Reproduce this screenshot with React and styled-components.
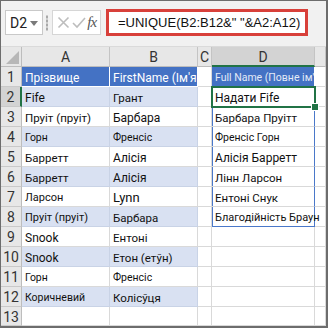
import React from 'react';
import styled, { createGlobalStyle } from 'styled-components';

const GlobalStyle = createGlobalStyle`
	html, body {
		margin: 0;
		padding: 0;
		background: #ffffff;
	}
	* {
		box-sizing: border-box;
	}
`;

const Sheet = styled('div')`
	width: 328px;
	height: 328px;
	border: 1px solid #6d6d6d;
	border-width: 1px 2px 2px 1px;
	display: flex;
	flex-direction: column;
	overflow: hidden;
	font-family: Roboto, "Liberation Sans", Arial, sans-serif;
	background: #ffffff;
`;

const FormulaBar = styled('div')`
	height: 46px;
	flex-shrink: 0;
	display: flex;
	align-items: center;
	padding: 0 0 2px 4px;
	background: #f1f1f1;
	border-bottom: 1px solid #dadada;
`;

const NameBox = styled('div')`
	width: 38px;
	height: 25px;
	background: #ffffff;
	border: 1px solid #c9c9c9;
	display: flex;
	align-items: center;
	padding-left: 4px;
	gap: 3px;
	font-size: 14px;
	color: #222;
`;

const Caret = styled('span')`
	width: 0;
	height: 0;
	border-left: 4px solid transparent;
	border-right: 4px solid transparent;
	border-top: 5px solid #7a7a7a;
	margin-top: 1px;
`;

const Grip = styled('div')`
	width: 2px;
	height: 16px;
	margin: 0 4px 0 3px;
	background-image: radial-gradient(#a9a9a9 0.8px, transparent 1px);
	background-size: 2px 4px;
`;

const FuncBox = styled('div')`
	width: 49px;
	height: 25px;
	background: #ffffff;
	border: 1px solid #d6d6d6;
	display: flex;
	align-items: center;
	justify-content: space-around;
	padding: 0 3px;
`;

const Fx = styled('span')`
	font-family: "Liberation Serif", "Times New Roman", serif;
	font-style: italic;
	font-size: 15px;
	color: #555;
	letter-spacing: -1px;
`;

const FormulaInput = styled('div')`
	margin-left: 5px;
	width: 202px;
	height: 27px;
	border: 3px solid #d8403a;
	background: #ffffff;
	display: flex;
	align-items: center;
	padding-left: 9px;
	font-family: "Liberation Sans", Arial, sans-serif;
	font-size: 13px;
	color: #111;
	white-space: nowrap;
`;

const Grid = styled('div')`
	flex: 1;
	display: grid;
	grid-template-columns: 21px 88px 88px 14px 103px 1fr;
	grid-template-rows: 20px repeat(12, 20px) 1fr;
	font-size: 11.5px;
`;

const Corner = styled('div')`
	background: #e7e7e7;
	border-right: 1px solid #bdbdbd;
	border-bottom: 1px solid #bdbdbd;
	position: relative;
	&::after {
		content: '';
		position: absolute;
		right: 2px;
		bottom: 2px;
		width: 0;
		height: 0;
		border-left: 13px solid transparent;
		border-bottom: 13px solid #b7b7b7;
	}
`;

const ColHead = styled('div')`
	background: ${({ selected }) => (selected ? '#d3d3d3' : '#e7e7e7')};
	border-right: 1px solid #c4c4c4;
	border-bottom: ${({ selected }) => (selected ? '2px solid #217346' : '1px solid #bdbdbd')};
	display: flex;
	align-items: center;
	justify-content: center;
	font-size: 14px;
	color: #333;
	padding-top: 1px;
`;

const RowHead = styled('div')`
	background: ${({ selected }) => (selected ? '#d3d3d3' : '#e7e7e7')};
	border-right: ${({ selected }) => (selected ? '2px solid #217346' : '1px solid #bdbdbd')};
	border-bottom: 1px solid #c9c9c9;
	display: flex;
	align-items: center;
	justify-content: center;
	font-size: 14px;
	color: #333;
	padding-top: 1px;
`;

// plain cells stay transparent so text from the left neighbour can run over them
const fills = {
	header: '#4472c4',
	band: '#d9e1f2',
	plain: 'transparent',
};

const lines = {
	header: '#ffffff',
	band: '#c9d3e6',
	plain: '#d9d9d9',
};

const Cell = styled('div')`
	background: ${({ fill }) => fills[fill]};
	color: ${({ fill, light }) => (fill === 'header' ? (light ? '#e3eaf7' : '#ffffff') : '#111')};
	font-size: ${({ size }) => size || 11.5}px;
	border-right: 1px solid ${({ fill }) => lines[fill]};
	border-bottom: 1px solid ${({ fill }) => lines[fill]};
	white-space: nowrap;
	overflow: ${({ clip }) => (clip ? 'hidden' : 'visible')};
	line-height: 20px;
	padding: 1px 0 0 3px;
	${({ spill }) => spill && 'border-right: 1px solid #4a78c9; box-shadow: inset 1px 0 0 #4a78c9;'}
	${({ spillEnd }) => spillEnd && 'border-bottom: 1px solid #4a78c9;'}
	${({ active }) =>
		active &&
		`
		position: relative;
		&::after {
			content: '';
			position: absolute;
			left: -1px;
			top: -1px;
			right: -2px;
			bottom: -2px;
			border: 2px solid #217346;
		}
		&::before {
			content: '';
			position: absolute;
			right: -5px;
			bottom: -5px;
			width: 6px;
			height: 6px;
			background: #217346;
			border: 1px solid #ffffff;
			z-index: 2;
		}
	`}
`;

const CrossIcon = () => (
	<svg width="13" height="13" viewBox="0 0 13 13">
		<path d="M1.5 1.5 L11.5 11.5 M11.5 1.5 L1.5 11.5" stroke="#bdbdbd" strokeWidth="1.6" fill="none" />
	</svg>
);

const CheckIcon = () => (
	<svg width="14" height="13" viewBox="0 0 14 13">
		<path d="M1 7 L5 11 L13 2" stroke="#bdbdbd" strokeWidth="1.6" fill="none" />
	</svg>
);

const lastNames = ['Fife', 'Пруіт (пруіт)', 'Горн', 'Барретт', 'Барретт', 'Ларсон', 'Пруіт (пруіт)', 'Snook', 'Snook', 'Горн', 'Коричневий'];
const firstNames = ['Грант', 'Барбара', 'Френсіс', 'Алісія', 'Алісія', 'Lynn', 'Барбара', 'Ентоні', 'Етон (етўн)', 'Френсіс', 'Колісўця'];
const fullNames = ['Надати Fife', 'Барбара Пруітт', 'Френсіс Горн', 'Алісія Барретт', 'Лінн Ларсон', 'Ентоні Снук', 'Благодійність Браун'];

const aSizes = [12, 11.5, 10.5, 11.5, 11.5, 11, 11, 12, 12, 10.5, 10.5];
const bSizes = [11.5, 12, 10.5, 12, 12, 13, 11.5, 11.5, 11.5, 10.5, 11.5];
const dSizes = [12, 11.5, 10.5, 12, 11.5, 11.5, 11];

const App = () => {
	const rows = lastNames.map((last, i) => {
		const n = i + 2;
		const fill = n % 2 === 0 ? 'band' : 'plain';
		const full = fullNames[i];
		return (
			<React.Fragment key={n}>
				<RowHead selected={n === 2}>{n}</RowHead>
				<Cell fill={fill} size={aSizes[i]}>{last}</Cell>
				<Cell fill={fill} size={bSizes[i]}>{firstNames[i]}</Cell>
				<Cell fill="plain" />
				<Cell
					fill="plain"
					size={dSizes[i]}
					spill={full !== undefined}
					spillEnd={n === 8}
					active={n === 2}
				>
					{full}
				</Cell>
				<Cell fill="plain" />
			</React.Fragment>
		);
	});

	return (
		<>
			<GlobalStyle />
			<Sheet>
				<FormulaBar>
					<NameBox>
						D2
						<Caret />
					</NameBox>
					<Grip />
					<FuncBox>
						<CrossIcon />
						<CheckIcon />
						<Fx>fx</Fx>
					</FuncBox>
					<FormulaInput>=UNIQUE(B2:B12&amp;" "&amp;A2:A12)</FormulaInput>
				</FormulaBar>
				<Grid>
					<Corner />
					<ColHead>A</ColHead>
					<ColHead>B</ColHead>
					<ColHead>C</ColHead>
					<ColHead selected>D</ColHead>
					<ColHead />

					<RowHead>1</RowHead>
					<Cell fill="header" size={12}>Прізвище</Cell>
					<Cell fill="header" size={12} clip>FirstName (Ім'я)</Cell>
					<Cell fill="plain" />
					<Cell fill="header" size={10.5} light clip>Full Name (Повне ім'я)</Cell>
					<Cell fill="plain" />

					{rows}

					<RowHead>13</RowHead>
					<Cell fill="plain" />
					<Cell fill="plain" />
					<Cell fill="plain" />
					<Cell fill="plain" />
					<Cell fill="plain" />
				</Grid>
			</Sheet>
		</>
	);
};

export default App;
